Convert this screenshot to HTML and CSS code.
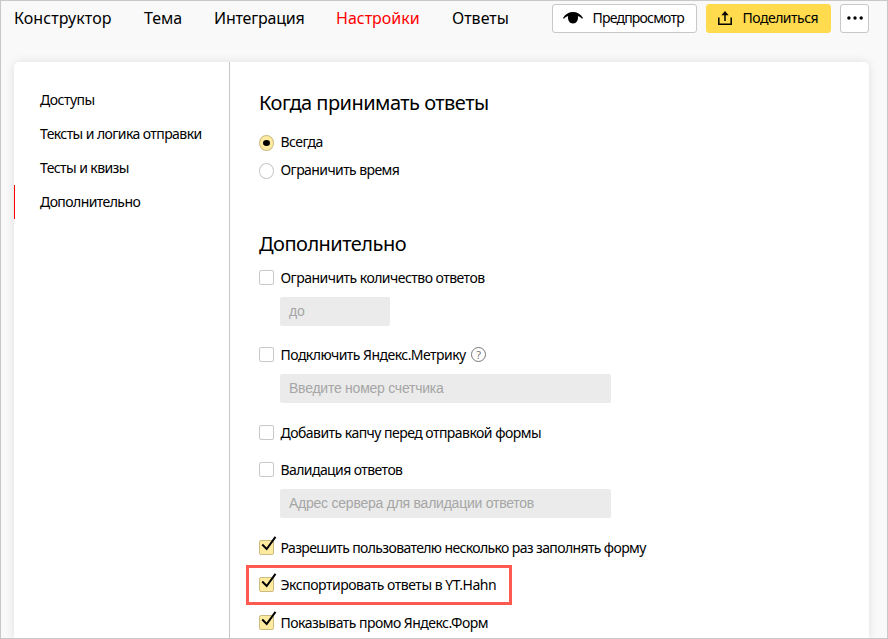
FILE: index.html
```html
<!DOCTYPE html>
<html lang="ru">
<head>
<meta charset="utf-8">
<title>Настройки формы</title>
<link rel="stylesheet" href="styles.css">
</head>
<body>
<div class="app">
  <header class="topbar">
    <nav class="tabs">
      <a class="tab tab-builder">Конструктор</a>
      <a class="tab tab-theme">Тема</a>
      <a class="tab tab-integration">Интеграция</a>
      <a class="tab tab-settings active">Настройки</a>
      <a class="tab tab-answers">Ответы</a>
    </nav>
    <div class="actions">
      <button class="btn preview"><svg width="20" height="12" viewBox="0 0 20 12"><path d="M0 6C2.500 1.900 6 .1 10 .1s7.500 1.800 10 5.900L19 6.800C17.800 5.400 16.400 4.500 14.900 4.100 15.500 8.200 13.600 11.600 10 11.600S4.500 8.200 5.100 4.100C3.600 4.500 2.200 5.400 1 6.800Z"/></svg><span>Предпросмотр</span></button>
      <button class="btn share"><svg width="14" height="14" viewBox="0 0 14 14"><path d="M.8 6.500V13.200H13.200V6.500M7 10V2" fill="none" stroke="#000" stroke-width="1.500"/><path d="M7 0 10.600 4.300H3.400Z"/></svg><span>Поделиться</span></button>
      <button class="btn more" aria-label="Ещё"><svg width="16" height="4" viewBox="0 0 16 4"><circle cx="1.900" cy="2" r="1.700"/><circle cx="8" cy="2" r="1.700"/><circle cx="14.200" cy="2" r="1.700"/></svg></button>
    </div>
  </header>
  <main class="card">
    <aside class="side">
      <a class="side-item s-access">Доступы</a>
      <a class="side-item s-texts">Тексты и логика отправки</a>
      <a class="side-item s-tests">Тесты и квизы</a>
      <a class="side-item s-extra current">Дополнительно</a>
    </aside>
    <section class="content">
      <h2 class="h-when">Когда принимать ответы</h2>
      <div class="option radio-row"><i class="radio on"></i><span class="l-always">Всегда</span></div>
      <div class="option radio-row"><i class="radio"></i><span class="l-time">Ограничить время</span></div>
      <h2 class="h-extra">Дополнительно</h2>
      <div class="option"><i class="box"></i><span class="l-limit">Ограничить количество ответов</span></div>
      <div class="field short f-to">до</div>
      <div class="option"><i class="box"></i><span class="l-metrika">Подключить Яндекс.Метрику</span><i class="help">?</i></div>
      <div class="field f-counter">Введите номер счетчика</div>
      <div class="option captcha"><i class="box"></i><span class="l-captcha">Добавить капчу перед отправкой формы</span></div>
      <div class="option"><i class="box"></i><span class="l-valid">Валидация ответов</span></div>
      <div class="field f-server">Адрес сервера для валидации ответов</div>
      <div class="option again"><i class="box checked"><svg class="tick" width="17" height="17" viewBox="0 0 17 17"><path d="M2.200 8.500 6.700 13 15.500 .8"/></svg></i><span class="l-again">Разрешить пользователю несколько раз заполнять форму</span></div>
      <div class="option export"><i class="box checked"><svg class="tick" width="17" height="17" viewBox="0 0 17 17"><path d="M2.200 8.500 6.700 13 15.500 .8"/></svg></i><span class="l-export">Экспортировать ответы в YT.Hahn</span></div>
      <div class="option"><i class="box checked"><svg class="tick" width="17" height="17" viewBox="0 0 17 17"><path d="M2.200 8.500 6.700 13 15.500 .8"/></svg></i><span class="l-promo">Показывать промо Яндекс.Форм</span></div>
    </section>
  </main>
</div>
</body>
</html>
```
FILE: styles.css
```css
*, *::before, *::after { box-sizing: border-box; }
body { margin: 0; font-family: "Noto Sans", sans-serif; color: #000; }
.app { width: 888px; height: 639px; overflow: hidden; background: #f9f9f9; border: 1px solid #c8c8c8; display: flex; flex-direction: column; }
.topbar { height: 61px; flex: none; display: flex; align-items: flex-start; justify-content: space-between; padding: 3px 18px 0 13px; }
.tabs { display: grid; grid-template-columns: 130px 70px 122px 116px 80px; }
.tab { font-size: 16px; line-height: 29px; white-space: nowrap; }
.tab-builder { letter-spacing: .08px; }
.tab-integration { letter-spacing: -.2px; }
.tab.active { color: #f00; }
.actions { display: flex; gap: 9px; }
.btn { height: 29px; font: 14px/27px "Noto Sans", sans-serif; color: #000; border: 1px solid #c8c8c8; border-radius: 3px; background: #fff; padding: 0; display: flex; align-items: center; white-space: nowrap; }
.btn svg { flex: none; margin-bottom: 1px; }
.btn span { line-height: 25px; padding-bottom: 2px; }
.preview { width: 145px; padding-left: 10px; gap: 9.5px; letter-spacing: -.8px; }
.share { width: 125px; padding-left: 11px; gap: 10.5px; background: #ffdb4d; border-color: #ffdb4d; letter-spacing: -.5px; }
.more { width: 29px; justify-content: center; }
.card { width: 855px; margin-left: 13px; flex: 1; background: #fff; border-radius: 5px 5px 0 0; box-shadow: 0 0 10px rgba(0,0,0,.11); display: flex; }
.side { width: 216px; border-right: 1px solid #c8c8c8; padding-top: 21px; display: flex; flex-direction: column; flex: none; }
.side-item { height: 34px; line-height: 34px; padding-left: 25px; border-left: 1px solid transparent; font-size: 14px; white-space: nowrap; letter-spacing: -.58px; }
.s-access { letter-spacing: -.5px; }
.side-item.current { border-left-color: #f00; }
.content { padding-left: 29px; width: 600px; }
h2 { margin: 0; font-size: 20px; font-weight: 400; line-height: 28px; white-space: nowrap; letter-spacing: -.52px; }
.h-when { margin: 27px 0 15px; }
.h-extra { margin: 50px 0 10px; }
.option { position: relative; height: 20px; display: flex; align-items: center; font-size: 14px; line-height: 20px; letter-spacing: -.53px; white-space: nowrap; }
.option span { margin-left: 6.5px; }
.l-time, .l-valid { letter-spacing: -.58px; }
.l-again { letter-spacing: -.63px; }
.l-export { letter-spacing: -.47px; }
.radio-row { margin-bottom: 8px; }
.radio { width: 15px; height: 16px; border: 1px solid #c8c8c8; border-radius: 50%; flex: none; display: grid; place-items: center; margin-top: 1px; }
.radio.on { background: #ffeba0; border-color: #ccbc80; }
.radio.on::after { content: ""; width: 7px; height: 6px; border-radius: 50%; background: #000; }
.box { width: 15px; height: 15px; border: 1px solid #c8c8c8; border-radius: 2px; flex: none; position: relative; top: -.5px; }
.box.checked { background: #ffeba0; border-color: #ccbc80; }
.tick { position: absolute; left: 0; top: -5px; fill: none; stroke: #000; stroke-width: 2; }
.help { width: 15px; height: 15px; border: 1px solid #777; border-radius: 50%; margin: 0 0 1px 5.5px; font: 11px/13px "Noto Sans", sans-serif; color: #777; text-align: center; letter-spacing: 0; }
.field { width: 331px; height: 29px; margin: 9px 0 20px 21px; padding-left: 9px; border-radius: 2px; background: #ebebeb; color: #a6a6a6; font: 14px/29px "Liberation Sans", sans-serif; letter-spacing: -.24px; white-space: nowrap; }
.field.short { width: 110px; margin-bottom: 19px; }
.captcha { margin: 20px 0 17px; }
.again { margin: 20px 0 17px; }
.export { margin-bottom: 18px; }
.export::after { content: ""; position: absolute; left: -13px; top: -10px; width: 266px; height: 40px; border: 3px solid #ff5a4f; }
```
